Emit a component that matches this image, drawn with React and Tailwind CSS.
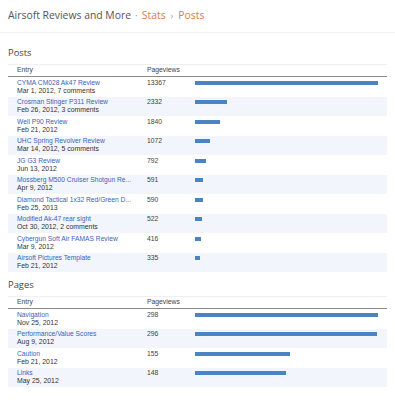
import React from "react";

const posts = [
  { title: "CYMA CM028 Ak47 Review", date: "Mar 1, 2012, 7 comments", views: 13367 },
  { title: "Crosman Stinger P311 Review", date: "Feb 26, 2012, 3 comments", views: 2332 },
  { title: "Well P90 Review", date: "Feb 21, 2012", views: 1840 },
  { title: "UHC Spring Revolver Review", date: "Mar 14, 2012, 5 comments", views: 1072 },
  { title: "JG G3 Review", date: "Jun 13, 2012", views: 792 },
  { title: "Mossberg M500 Cruiser Shotgun Re...", date: "Apr 9, 2012", views: 591 },
  { title: "Diamond Tactical 1x32 Red/Green D...", date: "Feb 25, 2013", views: 590 },
  { title: "Modified Ak-47 rear sight", date: "Oct 30, 2012, 2 comments", views: 522 },
  { title: "Cybergun Soft Air FAMAS Review", date: "Mar 9, 2012", views: 416 },
  { title: "Airsoft Pictures Template", date: "Feb 21, 2012", views: 335 },
];

const pages = [
  { title: "Navigation", date: "Nov 25, 2012", views: 298 },
  { title: "Performance/Value Scores", date: "Aug 9, 2012", views: 296 },
  { title: "Caution", date: "Feb 21, 2012", views: 155 },
  { title: "Links", date: "May 25, 2012", views: 148 },
];

const BAR_MAX = 183;

const StatsTable = ({ rows }) => {
  const max = Math.max(...rows.map((r) => r.views));
  return (
    <div className="mx-[8px] w-[379px] font-['Liberation_Sans',Arial,sans-serif] text-[6.8px]">
      <div className="flex h-[13px] items-center border-t border-[#f0f0f0] border-b border-b-[#8a8a8a] text-[#444]">
        <div className="w-[139px] pl-[9px]">Entry</div>
        <div className="w-[48px]">Pageviews</div>
      </div>
      {rows.map((r, i) => (
        <div
          key={r.title}
          className={`flex h-[19.5px] pt-[1.5px] leading-[8px] ${i % 2 === 1 ? "bg-[#f2f5fb]" : "bg-white"}`}
        >
          <div className="w-[139px] pl-[9px]">
            <div className="truncate text-[6.7px] text-[#3b63b8]">{r.title}</div>
            <div className="text-[6.9px] text-[#333]">{r.date}</div>
          </div>
          <div className="w-[48px] text-[#444]">{r.views}</div>
          <div className="flex h-[8px] items-center">
            <div
              className="h-[4px] bg-[#4a84c5]"
              style={{ width: Math.max(4, Math.round((r.views / max) * BAR_MAX)) + "px" }}
            />
          </div>
        </div>
      ))}
    </div>
  );
};

export default function App() {
  return (
    <div className="w-[395px] h-[400px] bg-white font-['Open_Sans',sans-serif]">
      <div className="flex h-[33px] items-center border-b border-[#f2f2f2] px-[8px] text-[10.4px]">
        <span className="text-[#555]">Airsoft Reviews and More</span>
        <span className="mx-[4px] text-[#999]">·</span>
        <span className="text-[#e07a45]">Stats</span>
        <span className="mx-[5px] text-[9px] text-[#999]">›</span>
        <span className="text-[#e07a45]">Posts</span>
      </div>
      <div className="px-[8px] pt-[13px] pb-[5px] text-[9.4px] leading-[13px] text-[#444]">Posts</div>
      <StatsTable rows={posts} />
      <div className="px-[8px] pt-[6px] pb-[5px] text-[9.4px] leading-[13px] text-[#444]">Pages</div>
      <StatsTable rows={pages} />
    </div>
  );
}
